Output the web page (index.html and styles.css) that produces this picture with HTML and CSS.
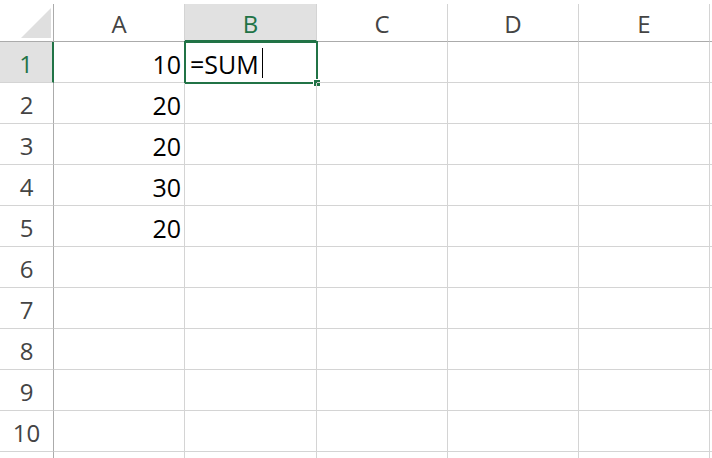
FILE: index.html
```html
<!DOCTYPE html>
<html>
<head>
<meta charset="utf-8">
<link rel="stylesheet" href="styles.css">
</head>
<body>
<div class="sheet">
  <div class="corner"><span class="tri"></span></div>
  <div class="ch">A</div>
  <div class="ch sel">B</div>
  <div class="ch">C</div>
  <div class="ch">D</div>
  <div class="ch">E</div>
  <div class="ch rest"></div>

  <div class="rh sel">1</div><div class="c num">10</div><div class="c active"><span class="formula">=SUM</span><span class="caret"></span><span class="handle"></span></div><div class="c"></div><div class="c"></div><div class="c"></div><div class="c rest"></div>
  <div class="rh">2</div><div class="c num">20</div><div class="c"></div><div class="c"></div><div class="c"></div><div class="c"></div><div class="c rest"></div>
  <div class="rh">3</div><div class="c num">20</div><div class="c"></div><div class="c"></div><div class="c"></div><div class="c"></div><div class="c rest"></div>
  <div class="rh">4</div><div class="c num">30</div><div class="c"></div><div class="c"></div><div class="c"></div><div class="c"></div><div class="c rest"></div>
  <div class="rh">5</div><div class="c num">20</div><div class="c"></div><div class="c"></div><div class="c"></div><div class="c"></div><div class="c rest"></div>
  <div class="rh">6</div><div class="c"></div><div class="c"></div><div class="c"></div><div class="c"></div><div class="c"></div><div class="c rest"></div>
  <div class="rh">7</div><div class="c"></div><div class="c"></div><div class="c"></div><div class="c"></div><div class="c"></div><div class="c rest"></div>
  <div class="rh">8</div><div class="c"></div><div class="c"></div><div class="c"></div><div class="c"></div><div class="c"></div><div class="c rest"></div>
  <div class="rh">9</div><div class="c"></div><div class="c"></div><div class="c"></div><div class="c"></div><div class="c"></div><div class="c rest"></div>
  <div class="rh">10</div><div class="c"></div><div class="c"></div><div class="c"></div><div class="c"></div><div class="c"></div><div class="c rest"></div>
  <div class="rh last"></div><div class="c last"></div><div class="c last"></div><div class="c last"></div><div class="c last"></div><div class="c last"></div><div class="c rest last"></div>
</div>
</body>
</html>
```
FILE: styles.css
```css
* { box-sizing: border-box; margin: 0; padding: 0; }
html, body { width: 712px; height: 458px; overflow: hidden; background: #fff; }
body { padding-top: 4px; font-family: "Open Sans", "Liberation Sans", sans-serif; }
.sheet {
  display: grid;
  grid-template-columns: 54px 131px 132px 131px 131px 131px 1fr;
  grid-template-rows: 38px repeat(10, 41px) 1fr;
  height: 454px;
}
.corner {
  position: relative;
  border-right: 1px solid #ababab;
  border-bottom: 1px solid #ababab;
}
.tri {
  position: absolute;
  right: 2px;
  bottom: 3px;
  width: 0; height: 0;
  border-left: 30px solid transparent;
  border-bottom: 30px solid #dfdfdf;
}
.ch {
  display: flex;
  align-items: center;
  justify-content: center;
  font-size: 24px;
  color: #444;
  border-right: 1px solid #d4d4d4;
  border-bottom: 1px solid #ababab;
  padding-top: 2px;
}
.ch.sel {
  background: #e1e1e1;
  color: #217346;
  border-bottom: 2px solid #217346;
}
.rh {
  display: flex;
  align-items: center;
  justify-content: center;
  font-size: 24px;
  color: #444;
  border-right: 1px solid #ababab;
  border-bottom: 1px solid #d4d4d4;
  padding-top: 3px;
}
.rh.sel {
  background: #e1e1e1;
  color: #217346;
  border-right: 2px solid #217346;
}
.c {
  position: relative;
  border-right: 1px solid #d4d4d4;
  border-bottom: 1px solid #d4d4d4;
  font-size: 25px;
  color: #000;
  display: flex;
  align-items: center;
}
.last { border-bottom: none; }
.rest { border-right: none; }
.num {
  justify-content: flex-end;
  padding-right: 3px;
  padding-top: 4px;
}
.active {
  padding-left: 5px;
  padding-top: 4px;
}
.active::before {
  content: "";
  position: absolute;
  left: -1px; top: -1px; right: -2px; bottom: -2px;
  border: 2px solid #217346;
  pointer-events: none;
}
.caret {
  display: inline-block;
  width: 1px;
  height: 30px;
  background: #000;
  margin-left: 3px;
  margin-top: -2px;
}
.handle {
  position: absolute;
  right: -4px;
  bottom: -4px;
  width: 6px;
  height: 6px;
  background: #217346;
  border: 1px solid #fff;
  box-sizing: content-box;
  margin: -1px;
}
```
